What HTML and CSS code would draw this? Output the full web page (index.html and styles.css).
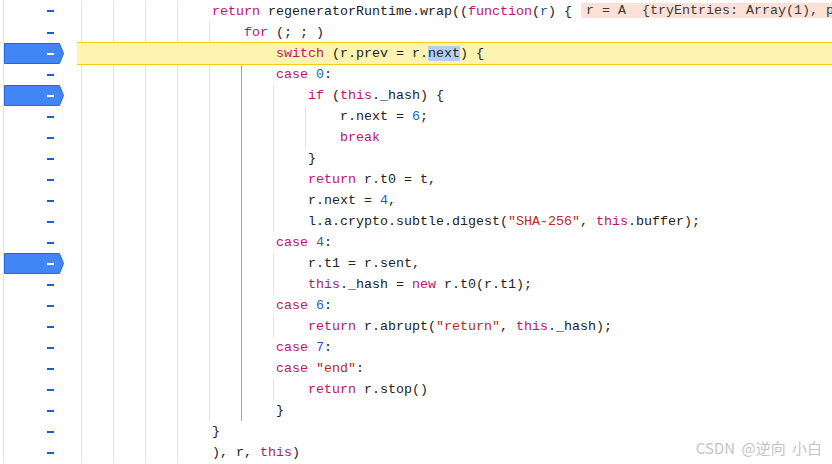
FILE: index.html
```html
<!DOCTYPE html>
<html lang="en">
  <head>
    <meta charset="utf-8">
    <title>Sources</title>
    <link rel="stylesheet" href="styles.css">
  </head>
  <body>
    <div class="editor">
      <div class="row">
        <div class="gut"><span class="dash"></span></div>
        <div class="code"><span class="ind"></span><span class="ind"></span><span class="ind"></span><span class="ind"></span><span class="txt"><b>return</b> regeneratorRuntime.wrap((<b>function</b>(<em>r</em>) {<span class="val">r = A  {tryEntries: Array(1), p</span></span></div>
      </div>
      <div class="row">
        <div class="gut"><span class="dash"></span></div>
        <div class="code"><span class="ind"></span><span class="ind"></span><span class="ind"></span><span class="ind"></span><span class="ind"></span><span class="txt"><b>for</b> (; ; )</span></div>
      </div>
      <div class="row paused bp">
        <div class="gut"><svg class="marker" width="60" height="21" viewBox="0 0 60 21"><path d="M0.5 0.5H55.5L59.5 10.5L55.5 20.5H0.5Z" fill="#4285f4" stroke="#1a6ce0"/></svg><span class="dash"></span></div>
        <div class="code"><span class="ind"></span><span class="ind"></span><span class="ind"></span><span class="ind"></span><span class="ind"></span><span class="ind"></span><span class="txt"><b>switch</b> (r.prev = r.<span class="sel">next</span>) {</span></div>
      </div>
      <div class="row">
        <div class="gut"><span class="dash"></span></div>
        <div class="code"><span class="ind"></span><span class="ind"></span><span class="ind"></span><span class="ind"></span><span class="ind"></span><span class="ind on"></span><span class="txt"><b>case</b> <u>0</u>:</span></div>
      </div>
      <div class="row bp">
        <div class="gut"><svg class="marker" width="60" height="21" viewBox="0 0 60 21"><path d="M0.5 0.5H55.5L59.5 10.5L55.5 20.5H0.5Z" fill="#4285f4" stroke="#1a6ce0"/></svg><span class="dash"></span></div>
        <div class="code"><span class="ind"></span><span class="ind"></span><span class="ind"></span><span class="ind"></span><span class="ind"></span><span class="ind on"></span><span class="ind"></span><span class="txt"><b>if</b> (<b>this</b>._hash) {</span></div>
      </div>
      <div class="row">
        <div class="gut"><span class="dash"></span></div>
        <div class="code"><span class="ind"></span><span class="ind"></span><span class="ind"></span><span class="ind"></span><span class="ind"></span><span class="ind on"></span><span class="ind"></span><span class="ind"></span><span class="txt">r.next = <u>6</u>;</span></div>
      </div>
      <div class="row">
        <div class="gut"><span class="dash"></span></div>
        <div class="code"><span class="ind"></span><span class="ind"></span><span class="ind"></span><span class="ind"></span><span class="ind"></span><span class="ind on"></span><span class="ind"></span><span class="ind"></span><span class="txt"><b>break</b></span></div>
      </div>
      <div class="row">
        <div class="gut"><span class="dash"></span></div>
        <div class="code"><span class="ind"></span><span class="ind"></span><span class="ind"></span><span class="ind"></span><span class="ind"></span><span class="ind on"></span><span class="ind"></span><span class="txt">}</span></div>
      </div>
      <div class="row">
        <div class="gut"><span class="dash"></span></div>
        <div class="code"><span class="ind"></span><span class="ind"></span><span class="ind"></span><span class="ind"></span><span class="ind"></span><span class="ind on"></span><span class="ind"></span><span class="txt"><b>return</b> r.t0 = t,</span></div>
      </div>
      <div class="row">
        <div class="gut"><span class="dash"></span></div>
        <div class="code"><span class="ind"></span><span class="ind"></span><span class="ind"></span><span class="ind"></span><span class="ind"></span><span class="ind on"></span><span class="ind"></span><span class="txt">r.next = <u>4</u>,</span></div>
      </div>
      <div class="row">
        <div class="gut"><span class="dash"></span></div>
        <div class="code"><span class="ind"></span><span class="ind"></span><span class="ind"></span><span class="ind"></span><span class="ind"></span><span class="ind on"></span><span class="ind"></span><span class="txt">l.a.crypto.subtle.digest(<s>"SHA-256"</s>, <b>this</b>.buffer);</span></div>
      </div>
      <div class="row">
        <div class="gut"><span class="dash"></span></div>
        <div class="code"><span class="ind"></span><span class="ind"></span><span class="ind"></span><span class="ind"></span><span class="ind"></span><span class="ind on"></span><span class="txt"><b>case</b> <u>4</u>:</span></div>
      </div>
      <div class="row bp">
        <div class="gut"><svg class="marker" width="60" height="21" viewBox="0 0 60 21"><path d="M0.5 0.5H55.5L59.5 10.5L55.5 20.5H0.5Z" fill="#4285f4" stroke="#1a6ce0"/></svg><span class="dash"></span></div>
        <div class="code"><span class="ind"></span><span class="ind"></span><span class="ind"></span><span class="ind"></span><span class="ind"></span><span class="ind on"></span><span class="ind"></span><span class="txt">r.t1 = r.sent,</span></div>
      </div>
      <div class="row">
        <div class="gut"><span class="dash"></span></div>
        <div class="code"><span class="ind"></span><span class="ind"></span><span class="ind"></span><span class="ind"></span><span class="ind"></span><span class="ind on"></span><span class="ind"></span><span class="txt"><b>this</b>._hash = <b>new</b> r.t0(r.t1);</span></div>
      </div>
      <div class="row">
        <div class="gut"><span class="dash"></span></div>
        <div class="code"><span class="ind"></span><span class="ind"></span><span class="ind"></span><span class="ind"></span><span class="ind"></span><span class="ind on"></span><span class="txt"><b>case</b> <u>6</u>:</span></div>
      </div>
      <div class="row">
        <div class="gut"><span class="dash"></span></div>
        <div class="code"><span class="ind"></span><span class="ind"></span><span class="ind"></span><span class="ind"></span><span class="ind"></span><span class="ind on"></span><span class="ind"></span><span class="txt"><b>return</b> r.abrupt(<s>"return"</s>, <b>this</b>._hash);</span></div>
      </div>
      <div class="row">
        <div class="gut"><span class="dash"></span></div>
        <div class="code"><span class="ind"></span><span class="ind"></span><span class="ind"></span><span class="ind"></span><span class="ind"></span><span class="ind on"></span><span class="txt"><b>case</b> <u>7</u>:</span></div>
      </div>
      <div class="row">
        <div class="gut"><span class="dash"></span></div>
        <div class="code"><span class="ind"></span><span class="ind"></span><span class="ind"></span><span class="ind"></span><span class="ind"></span><span class="ind on"></span><span class="txt"><b>case</b> <s>"end"</s>:</span></div>
      </div>
      <div class="row">
        <div class="gut"><span class="dash"></span></div>
        <div class="code"><span class="ind"></span><span class="ind"></span><span class="ind"></span><span class="ind"></span><span class="ind"></span><span class="ind on"></span><span class="ind"></span><span class="txt"><b>return</b> r.stop()</span></div>
      </div>
      <div class="row">
        <div class="gut"><span class="dash"></span></div>
        <div class="code"><span class="ind"></span><span class="ind"></span><span class="ind"></span><span class="ind"></span><span class="ind"></span><span class="ind on"></span><span class="txt">}</span></div>
      </div>
      <div class="row">
        <div class="gut"><span class="dash"></span></div>
        <div class="code"><span class="ind"></span><span class="ind"></span><span class="ind"></span><span class="ind"></span><span class="txt">}</span></div>
      </div>
      <div class="row">
        <div class="gut"><span class="dash"></span></div>
        <div class="code"><span class="ind"></span><span class="ind"></span><span class="ind"></span><span class="ind"></span><span class="txt">), r, <b>this</b>)</span></div>
      </div>
    </div>
    <div class="watermark">CSDN @逆向 小白</div>
  </body>
</html>
```

FILE: styles.css
```css
html, body {
  margin: 0;
  height: 100%;
  overflow: hidden;
  background: #fff;
}
.editor {
  height: 100%;
  padding-top: 1px;
  box-sizing: border-box;
  font-family: "Liberation Mono", "DejaVu Sans Mono", monospace;
  font-size: 13.333px;
  color: #222;
}
.row {
  display: flex;
  height: 21px;
  line-height: 21px;
}
.row:first-child .gut {
  margin-top: -1px;
  height: 22px;
}
.gut {
  position: relative;
  flex: none;
  width: 73px;
  margin-left: 3px;
  border-left: 1px solid #dce4f2;
}
.dash {
  position: absolute;
  left: 43px;
  top: 10px;
  width: 7px;
  height: 2px;
  background: #1a5fd0;
}
.marker {
  position: absolute;
  left: 0;
  top: 0;
  display: block;
}
.bp .dash {
  background: #fff;
}
.code {
  display: flex;
  flex: 1;
  min-width: 0;
  overflow: hidden;
  padding-left: 4px;
}
.ind {
  flex: none;
  width: 32px;
  box-sizing: border-box;
  border-left: 1px solid #dbe3f3;
}
.ind.on {
  border-left-color: #86a8e6;
}
.txt {
  padding-left: 3px;
  white-space: pre;
}
.paused .code {
  position: relative;
  z-index: 1;
  overflow: visible;
  background: #fcf4b0;
  box-shadow: 0 -1px 0 #f6cd10, 0 1px 0 #f6cd10;
}
.paused .ind {
  border-left-color: transparent;
}
.code b {
  font-weight: normal;
  color: #c0126f;
}
.code em {
  font-style: normal;
  color: #1f4aa8;
}
.code u {
  text-decoration: none;
  color: #1a5fd0;
}
.code s {
  text-decoration: none;
  color: #c0281c;
}
.sel {
  background: #b4cff6;
}
.val {
  display: inline-block;
  margin-left: 9px;
  padding: 0 6px 0 5px;
  height: 15px;
  line-height: 15px;
  vertical-align: 1px;
  background: #fde1d7;
  color: #3a3a3a;
}
.watermark {
  position: absolute;
  right: 10px;
  bottom: 6px;
  font-family: "Noto Sans CJK SC", "Noto Sans", sans-serif;
  font-size: 15px;
  word-spacing: 3px;
  color: #c4c4c4;
}
```
